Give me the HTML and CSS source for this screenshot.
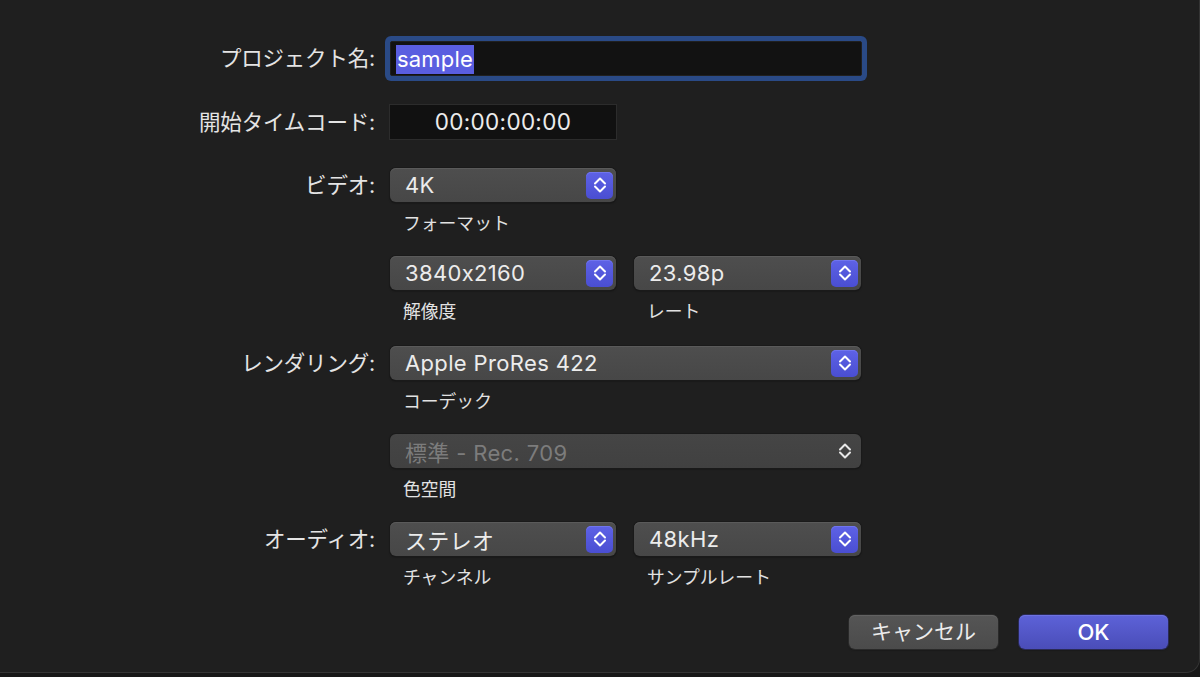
FILE: index.html
```html
<!DOCTYPE html>
<html lang="ja">
<head>
<meta charset="utf-8">
<title>プロジェクト設定</title>
<link rel="stylesheet" href="styles.css">
</head>
<body>
<div class="dialog">
  <div class="form">
    <div class="row row-name">
      <div class="label">プロジェクト名:</div>
      <div class="content">
        <div class="textfield"><span class="sel">sample</span></div>
      </div>
    </div>

    <div class="row row-tc">
      <div class="label">開始タイムコード:</div>
      <div class="content">
        <div class="timecode">00:00:00:00</div>
      </div>
    </div>

    <div class="row row-popup">
      <div class="label">ビデオ:</div>
      <div class="content">
        <div class="group half">
          <div class="popup"><span class="ptext">4K</span><span class="stepper"><svg viewBox="0 0 16 20" width="16" height="20"><path d="M3 8.5 L8 3.5 L13 8.5 M3 11.5 L8 16.5 L13 11.5" fill="none" stroke="#fff" stroke-width="2" stroke-linecap="round" stroke-linejoin="round"/></svg></span></div>
          <div class="sub">フォーマット</div>
        </div>
      </div>
    </div>

    <div class="row row-popup">
      <div class="label"></div>
      <div class="content two">
        <div class="group half">
          <div class="popup"><span class="ptext">3840x2160</span><span class="stepper"><svg viewBox="0 0 16 20" width="16" height="20"><path d="M3 8.5 L8 3.5 L13 8.5 M3 11.5 L8 16.5 L13 11.5" fill="none" stroke="#fff" stroke-width="2" stroke-linecap="round" stroke-linejoin="round"/></svg></span></div>
          <div class="sub">解像度</div>
        </div>
        <div class="group half">
          <div class="popup"><span class="ptext">23.98p</span><span class="stepper"><svg viewBox="0 0 16 20" width="16" height="20"><path d="M3 8.5 L8 3.5 L13 8.5 M3 11.5 L8 16.5 L13 11.5" fill="none" stroke="#fff" stroke-width="2" stroke-linecap="round" stroke-linejoin="round"/></svg></span></div>
          <div class="sub">レート</div>
        </div>
      </div>
    </div>

    <div class="row row-popup row-render">
      <div class="label">レンダリング:</div>
      <div class="content">
        <div class="group full">
          <div class="popup"><span class="ptext">Apple ProRes 422</span><span class="stepper"><svg viewBox="0 0 16 20" width="16" height="20"><path d="M3 8.5 L8 3.5 L13 8.5 M3 11.5 L8 16.5 L13 11.5" fill="none" stroke="#fff" stroke-width="2" stroke-linecap="round" stroke-linejoin="round"/></svg></span></div>
          <div class="sub">コーデック</div>
        </div>
      </div>
    </div>

    <div class="row row-popup">
      <div class="label"></div>
      <div class="content">
        <div class="group full">
          <div class="popup disabled"><span class="ptext">標準 - Rec. 709</span><span class="stepper plain"><svg viewBox="0 0 16 20" width="16" height="20"><path d="M3 8.5 L8 3.5 L13 8.5 M3 11.5 L8 16.5 L13 11.5" fill="none" stroke="#e8e8e8" stroke-width="2" stroke-linecap="round" stroke-linejoin="round"/></svg></span></div>
          <div class="sub">色空間</div>
        </div>
      </div>
    </div>

    <div class="row row-popup">
      <div class="label">オーディオ:</div>
      <div class="content two">
        <div class="group half">
          <div class="popup"><span class="ptext">ステレオ</span><span class="stepper"><svg viewBox="0 0 16 20" width="16" height="20"><path d="M3 8.5 L8 3.5 L13 8.5 M3 11.5 L8 16.5 L13 11.5" fill="none" stroke="#fff" stroke-width="2" stroke-linecap="round" stroke-linejoin="round"/></svg></span></div>
          <div class="sub">チャンネル</div>
        </div>
        <div class="group half">
          <div class="popup"><span class="ptext">48kHz</span><span class="stepper"><svg viewBox="0 0 16 20" width="16" height="20"><path d="M3 8.5 L8 3.5 L13 8.5 M3 11.5 L8 16.5 L13 11.5" fill="none" stroke="#fff" stroke-width="2" stroke-linecap="round" stroke-linejoin="round"/></svg></span></div>
          <div class="sub">サンプルレート</div>
        </div>
      </div>
    </div>
  </div>

  <div class="buttons">
    <button class="btn cancel">キャンセル</button>
    <button class="btn ok">OK</button>
  </div>
</div>
</body>
</html>
```

FILE: styles.css
```css
* { box-sizing: border-box; }

html, body {
  margin: 0;
  padding: 0;
  background: #171717;
  width: 1200px;
  height: 677px;
  overflow: hidden;
  font-family: Inter, "Noto Sans CJK JP", sans-serif;
  color: #e6e6e6;
}

.dialog {
  width: 1200px;
  height: 673px;
  background: #1f1f1f;
  border-right: 1px solid #343434;
  border-bottom: 1px solid #343434;
  border-bottom-right-radius: 14px;
  padding-top: 41px;
  display: flex;
  flex-direction: column;
}

.form {
  display: flex;
  flex-direction: column;
}

.row {
  display: flex;
  align-items: flex-start;
}

.label {
  width: 375px;
  flex: none;
  text-align: right;
  font-size: 21.5px;
  line-height: 34px;
  color: #e4e4e4;
  letter-spacing: -0.2px;
}

.content {
  margin-left: 15px;
  display: flex;
}

.content.two { gap: 18px; }

.row-name { height: 63px; }
.row-name .label { line-height: 35px; }

.textfield {
  width: 472px;
  height: 35px;
  background: #121212;
  border: 1px solid #202020;
  border-radius: 2px;
  box-shadow: 0 0 0 5px #2a4a86;
  padding: 3px 0 0 5px;
}

.sel {
  display: inline-block;
  background: #5a5ee0;
  color: #fff;
  font-size: 22px;
  line-height: 29px;
  height: 29px;
  padding: 0 1px;
  letter-spacing: 0.2px;
}

.row-tc { height: 64px; }
.row-tc .label { line-height: 36px; }

.timecode {
  margin-left: -1px;
  width: 228px;
  height: 36px;
  background: #111111;
  border: 1px solid #2c2c2c;
  text-align: center;
  font-size: 22.5px;
  line-height: 34px;
  color: #ececec;
  letter-spacing: 0.3px;
}

.row-render { margin-top: 2px; }

.group {
  display: flex;
  flex-direction: column;
}
.group.half { width: 226px; }
.group.half + .group.half { width: 227px; }
.group.full { width: 471px; }

.popup {
  height: 34px;
  border-radius: 6px;
  background: linear-gradient(#4e4e4e, #474747);
  box-shadow: 0 0 0 1px #1a1a1a, 0 1px 2px rgba(0,0,0,0.6), inset 0 1px 0 #5a5a5a;
  display: flex;
  align-items: center;
  justify-content: space-between;
  padding: 0 3px 0 15px;
}

.ptext {
  font-size: 22px;
  color: #ececec;
  letter-spacing: 0.35px;
}

.stepper {
  width: 27px;
  height: 27px;
  border-radius: 5px;
  background: linear-gradient(#5e62e6, #4a4ed2);
  box-shadow: inset 0 1px 0 #7075ee;
  display: flex;
  align-items: center;
  justify-content: center;
}

.stepper svg { display: block; }

.stepper.plain {
  background: none;
  box-shadow: none;
}

.popup.disabled {
  background: linear-gradient(#454545, #414141);
  box-shadow: 0 0 0 1px #1a1a1a, 0 1px 2px rgba(0,0,0,0.5);
}
.popup.disabled .ptext { color: #7c7c7c; }

.sub {
  height: 54px;
  padding: 11px 0 0 13px;
  font-size: 17.8px;
  line-height: 22px;
  color: #e2e2e2;
}

.buttons {
  display: flex;
  justify-content: flex-end;
  gap: 21px;
  padding-right: 31px;
  margin-top: 5px;
}

.btn {
  width: 149px;
  height: 34px;
  border-radius: 6px;
  border: none;
  font-family: Inter, "Noto Sans CJK JP", sans-serif;
  font-size: 21px;
  color: #ececec;
  padding: 0;
  line-height: 34px;
}

.btn.cancel {
  background: linear-gradient(#555555, #4b4b4b);
  box-shadow: 0 0 0 1px #2a2a2a, inset 0 1px 0 #626262, 0 1px 2px rgba(0,0,0,0.5);
}

.btn.ok {
  background: linear-gradient(#5d62d8, #4a4db8);
  box-shadow: 0 0 0 1px #2a2a55, inset 0 1px 0 #6d72e0, 0 1px 2px rgba(0,0,0,0.5);
  color: #fff;
  font-weight: 500;
  font-size: 22px;
}
```
